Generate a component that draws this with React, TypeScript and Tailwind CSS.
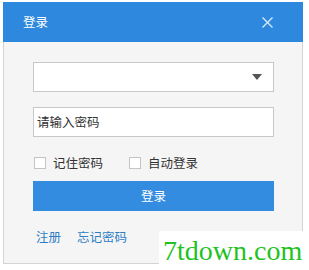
import React from "react";

export default function App() {
  return (
    <div
      className="relative w-[309px] h-[270px] bg-white overflow-hidden"
      style={{ fontFamily: '"Noto Sans CJK SC", "Noto Sans", sans-serif' }}
    >
      <div className="absolute left-[3px] top-[2px] w-[300px] h-[262px] flex flex-col border border-[#d4d4d4] bg-[#f5f5f5]">
        <div className="h-[40px] bg-[#2e88de] flex items-center justify-between pl-[20px] pr-[30px] -mx-px -mt-px">
          <span className="text-white text-[12.5px]">登录</span>
          <svg width="11" height="11" viewBox="0 0 11 11">
            <path d="M0.5 0.5 L10.5 10.5 M10.5 0.5 L0.5 10.5" stroke="#dcebfa" strokeWidth="1.3" />
          </svg>
        </div>
        <div className="flex flex-col pl-[29px] pr-[28px] pt-[20px]">
          <div className="h-[30px] bg-white border border-[#c8c8c8] flex items-center justify-end pr-[11px]">
            <svg width="10" height="6" viewBox="0 0 10 6">
              <path d="M0 0 L10 0 L5 6 Z" fill="#555" />
            </svg>
          </div>
          <div className="mt-[15px] h-[30px] bg-white border border-[#c8c8c8] flex items-center pl-[3px] text-[12.5px] text-[#333]">
            请输入密码
          </div>
          <div className="mt-[16px] flex items-center text-[12.5px] text-[#333] h-[20px]">
            <span className="w-[12px] h-[12px] border border-[#c4c4c4] bg-white ml-px"></span>
            <span className="ml-[7px]">记住密码</span>
            <span className="w-[12px] h-[12px] border border-[#c4c4c4] bg-white ml-[26px]"></span>
            <span className="ml-[7px]">自动登录</span>
          </div>
          <div className="mt-[8px] h-[30px] bg-[#338ce0] text-white text-[12.5px] flex items-center justify-center">
            登录
          </div>
          <div className="mt-[17px] flex items-center text-[12.5px] text-[#2f7fc4] pl-[3px]">
            <span>注册</span>
            <span className="ml-[16px]">忘记密码</span>
          </div>
        </div>
      </div>
      <div
        className="absolute left-[159px] top-[231px] w-[150px] h-[39px] bg-white flex items-center pl-[4px] text-[#1fc21f] text-[28px] leading-none"
        style={{ fontFamily: '"Liberation Serif", serif' }}
      >
        7tdown.com
      </div>
    </div>
  );
}
